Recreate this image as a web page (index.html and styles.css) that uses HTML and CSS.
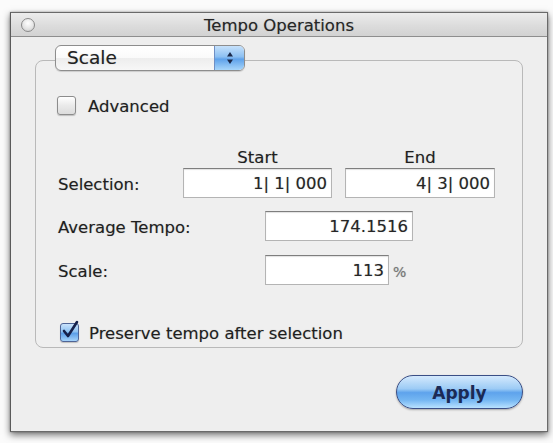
FILE: index.html
```html
<!DOCTYPE html>
<html>
<head>
<meta charset="utf-8">
<link rel="stylesheet" href="styles.css">
</head>
<body>
<div class="window">
  <div class="titlebar">
    <span class="close"></span>
    <span class="title">Tempo Operations</span>
    <span class="spacer"></span>
  </div>
  <div class="content">
    <div class="group">
      <div class="popup">
        <span class="popup-label">Scale</span>
        <span class="popup-arrows">
          <svg width="10" height="16" viewBox="0 0 10 16"><path d="M5 2 L8 6.5 L2 6.5 Z M5 14 L8 9.5 L2 9.5 Z" fill="#1c2a4a"/></svg>
        </span>
      </div>
      <div class="check-row adv">
        <span class="checkbox"></span>
        <span class="check-text">Advanced</span>
      </div>
      <div class="head-row">
        <span class="col-head col-start">Start</span>
        <span class="col-head col-end">End</span>
      </div>
      <div class="row row-sel">
        <span class="lbl lbl-sel">Selection:</span>
        <span class="field f-start">1| 1| 000</span>
        <span class="field f-end">4| 3| 000</span>
      </div>
      <div class="row row-avg">
        <span class="lbl lbl-wide">Average Tempo:</span>
        <span class="field f-avg">174.1516</span>
      </div>
      <div class="row row-scale">
        <span class="lbl lbl-wide">Scale:</span>
        <span class="field f-scale">113</span>
        <span class="unit">%</span>
      </div>
      <div class="check-row preserve">
        <span class="checkbox checked">
          <svg width="22" height="24" viewBox="0 0 22 24"><path d="M4 12 L8 17 L17 3" fill="none" stroke="#16204a" stroke-width="2.6" stroke-linecap="round" stroke-linejoin="round"/></svg>
        </span>
        <span class="check-text">Preserve tempo after selection</span>
      </div>
    </div>
    <div class="actions">
      <button class="apply">Apply</button>
    </div>
  </div>
</div>
</body>
</html>
```
FILE: styles.css
```css
html, body {
  margin: 0;
  padding: 0;
  background: #fbfbfb;
}
body {
  font-family: "DejaVu Sans", "Liberation Sans", sans-serif;
  color: #1f1f1f;
  width: 553px;
  height: 443px;
  overflow: hidden;
}
.window {
  box-sizing: border-box;
  margin: 12px 0 0 10px;
  width: 538px;
  height: 420px;
  border: 1px solid #6a6a6a;
  border-left-color: #5a5a5a;
  background: #eeeeee;
  box-shadow: 0 3px 7px rgba(0,0,0,0.55), 0 0 2px rgba(0,0,0,0.3);
  display: flex;
  flex-direction: column;
  text-shadow: 0 0 1px rgba(0,0,0,0.3);
}
.titlebar {
  height: 23px;
  border-bottom: 1px solid #8e8e8e;
  background: linear-gradient(#ececec, #dcdcdc 55%, #d2d2d2);
  display: flex;
  align-items: center;
}
.close {
  width: 12px;
  height: 12px;
  margin-left: 10px;
  border-radius: 50%;
  border: 1px solid #8a8a8a;
  background: radial-gradient(circle at 50% 35%, #ffffff, #e2e2e2 60%, #c4c4c4);
}
.title {
  flex: 1;
  text-align: center;
  font-size: 16.5px;
  color: #262626;
  margin-top: 1px;
}
.spacer {
  width: 24px;
}
.content {
  flex: 1;
  display: flex;
  flex-direction: column;
}
.group {
  margin: 23px 24px 0 24px;
  border: 1px solid #b9b9b9;
  border-radius: 8px;
  background: #efefef;
  padding: 0 0 4px 22px;
  height: 288px;
  box-sizing: border-box;
  display: flex;
  flex-direction: column;
}
.popup {
  margin: -16px 0 0 -3px;
  width: 190px;
  height: 28px;
  box-sizing: border-box;
  border: 1px solid #8d8d8d;
  border-radius: 6px;
  background: linear-gradient(#ffffff, #fafafa 50%, #ededed 51%, #f7f7f7);
  display: flex;
  align-items: center;
  overflow: hidden;
  box-shadow: 0 1px 1px rgba(0,0,0,0.15);
}
.popup-label {
  flex: 1;
  font-size: 18.5px;
  padding-left: 11px;
  color: #222;
  margin-top: -1px;
}
.popup-arrows {
  width: 29px;
  height: 100%;
  border-left: 1px solid #6f8fc4;
  background: linear-gradient(#c6e1fb, #8cc0f2 45%, #5fa2ea 55%, #a8d6fb);
  display: flex;
  align-items: center;
  justify-content: center;
}
.check-row {
  display: flex;
  align-items: center;
  font-size: 16.5px;
}
.adv {
  margin-top: 24px;
  height: 20px;
}
.checkbox {
  box-sizing: border-box;
  width: 19px;
  height: 19px;
  border: 1px solid #8c8c8c;
  border-radius: 3px;
  background: linear-gradient(#ffffff, #eaeaea 50%, #dcdcdc);
  box-shadow: 0 1px 1px rgba(0,0,0,0.2);
  position: relative;
  margin-left: -1px;
}
.check-text {
  padding-top: 3px;
}
.adv .check-text {
  margin-left: 12px;
}
.head-row {
  margin-top: 31px;
  height: 20px;
  display: flex;
  padding-left: 125px;
  gap: 13px;
  font-size: 16.5px;
}
.col-head {
  text-align: center;
  line-height: 20px;
  padding-top: 2px;
}
.col-start { width: 149px; }
.col-end { width: 150px; }
.row {
  display: flex;
  align-items: center;
  font-size: 16.5px;
}
.lbl {
  padding-top: 3px;
}
.row-sel { margin-top: 2px; }
.row-avg { margin-top: 13px; }
.row-scale { margin-top: 14px; }
.lbl-sel { width: 125px; }
.lbl-wide { width: 207px; }
.field {
  box-sizing: border-box;
  height: 30px;
  line-height: 30px;
  background: #fff;
  border: 1px solid #b4b4b4;
  border-top-color: #7e7e7e;
  box-shadow: inset 0 1px 1px rgba(0,0,0,0.12);
  text-align: right;
  padding-right: 4px;
  color: #262626;
}
.f-start { width: 149px; }
.f-end { width: 150px; margin-left: 13px; }
.f-avg { width: 148px; }
.f-scale { width: 124px; }
.unit {
  margin-left: 4px;
  font-size: 14px;
  color: #777;
  padding-top: 3px;
}
.preserve {
  margin-top: 36px;
  height: 22px;
}
.preserve .checkbox {
  margin-left: 2px;
  width: 19px;
  height: 19px;
  border-color: #4f6596;
  background: linear-gradient(#c9e2fb, #8ec2f2 45%, #5b9ee8 55%, #a5d3fb);
}
.checkbox.checked svg {
  position: absolute;
  left: -1px;
  top: -5px;
}
.preserve .check-text {
  margin-left: 10px;
}
.actions {
  display: flex;
  justify-content: flex-end;
  padding-right: 24px;
  margin-top: 27px;
}
.apply {
  width: 127px;
  height: 34px;
  border-radius: 17px;
  border: 1px solid #3b4f86;
  background: linear-gradient(#d4e9fd, #9ccbf5 40%, #5ea3ec 52%, #74b6f2 75%, #b9e2ff);
  box-shadow: 0 1px 2px rgba(0,0,0,0.3);
  font-family: "DejaVu Sans", "Liberation Sans", sans-serif;
  font-weight: bold;
  font-size: 17px;
  color: #1b2a55;
  padding: 2px 0 0 0;
}
```
